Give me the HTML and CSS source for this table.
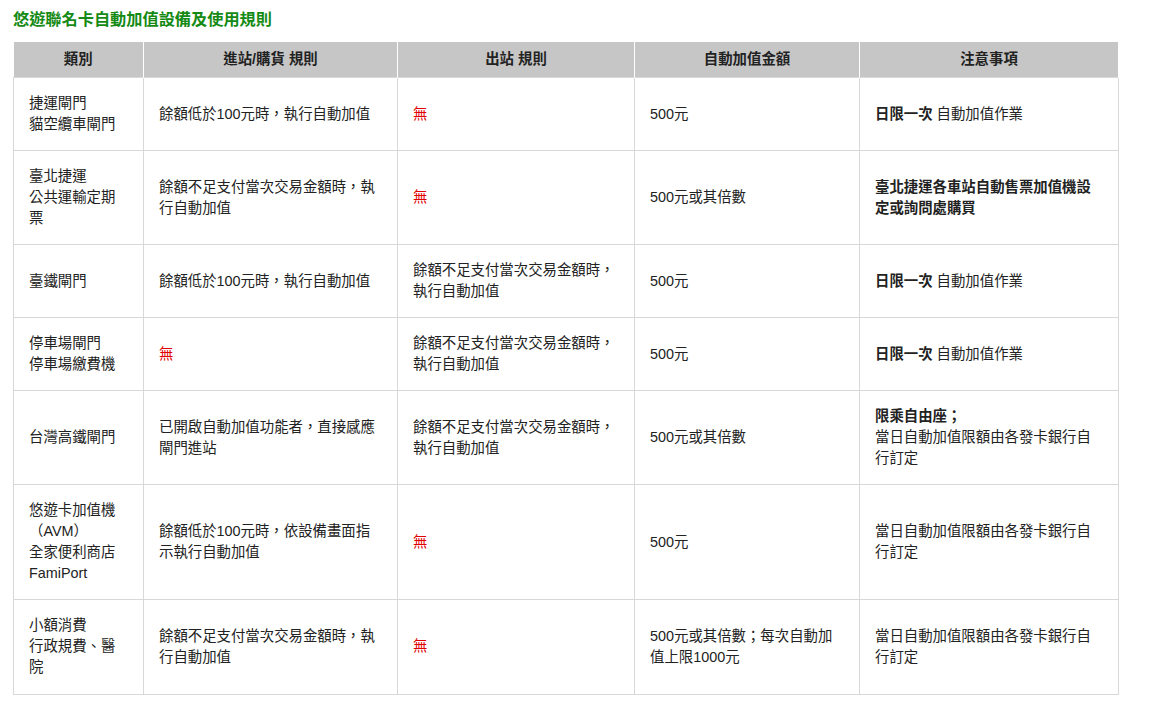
FILE: index.html
```html
<!DOCTYPE html>
<html lang="zh-Hant">
<head>
<meta charset="utf-8">
<title>悠遊聯名卡自動加值設備及使用規則</title>
<link rel="stylesheet" href="styles.css">
</head>
<body>
<h2 class="title">悠遊聯名卡自動加值設備及使用規則</h2>
<table class="rules">
  <colgroup>
    <col class="c1"><col class="c2"><col class="c3"><col class="c4"><col class="c5">
  </colgroup>
  <thead>
    <tr><th>類別</th><th>進站/購貨 規則</th><th>出站 規則</th><th>自動加值金額</th><th>注意事項</th></tr>
  </thead>
  <tbody>
    <tr>
      <td>捷運閘門<br>貓空纜車閘門</td>
      <td>餘額低於100元時，執行自動加值</td>
      <td><span class="none">無</span></td>
      <td>500元</td>
      <td><b>日限一次</b> 自動加值作業</td>
    </tr>
    <tr>
      <td>臺北捷運<br>公共運輸定期票</td>
      <td>餘額不足支付當次交易金額時，執行自動加值</td>
      <td><span class="none">無</span></td>
      <td>500元或其倍數</td>
      <td><b>臺北捷運各車站自動售票加值機設定或詢問處購買</b></td>
    </tr>
    <tr>
      <td>臺鐵閘門</td>
      <td>餘額低於100元時，執行自動加值</td>
      <td>餘額不足支付當次交易金額時，執行自動加值</td>
      <td>500元</td>
      <td><b>日限一次</b> 自動加值作業</td>
    </tr>
    <tr>
      <td>停車場閘門<br>停車場繳費機</td>
      <td><span class="none">無</span></td>
      <td>餘額不足支付當次交易金額時，執行自動加值</td>
      <td>500元</td>
      <td><b>日限一次</b> 自動加值作業</td>
    </tr>
    <tr>
      <td>台灣高鐵閘門</td>
      <td>已開啟自動加值功能者，直接感應閘門進站</td>
      <td>餘額不足支付當次交易金額時，執行自動加值</td>
      <td>500元或其倍數</td>
      <td><b>限乘自由座；</b><br>當日自動加值限額由各發卡銀行自行訂定</td>
    </tr>
    <tr>
      <td>悠遊卡加值機<br>（AVM）<br>全家便利商店<br>FamiPort</td>
      <td>餘額低於100元時，依設備畫面指示執行自動加值</td>
      <td><span class="none">無</span></td>
      <td>500元</td>
      <td>當日自動加值限額由各發卡銀行自行訂定</td>
    </tr>
    <tr>
      <td>小額消費<br>行政規費、醫院</td>
      <td>餘額不足支付當次交易金額時，執行自動加值</td>
      <td><span class="none">無</span></td>
      <td>500元或其倍數；每次自動加值上限1000元</td>
      <td>當日自動加值限額由各發卡銀行自行訂定</td>
    </tr>
  </tbody>
</table>
</body>
</html>
```

FILE: styles.css
```css
html, body {
  margin: 0;
  padding: 0;
  background: #fff;
}
body {
  padding: 8px 13px;
  font-family: "Liberation Sans", "Noto Sans CJK TC", sans-serif;
  color: #222;
}
.title {
  margin: 0 0 12px 0;
  font-size: 16.2px;
  line-height: 22px;
  font-weight: bold;
  color: #158a15;
}
.rules {
  width: 1105px;
  table-layout: fixed;
  border-collapse: collapse;
  font-size: 14.4px;
  line-height: 21px;
}
.c1 { width: 130px; }
.c2 { width: 254px; }
.c3 { width: 237px; }
.c4 { width: 225px; }
.c5 { width: 259px; }
.rules th {
  background: #c6c6c6;
  color: #222;
  font-weight: bold;
  text-align: center;
  padding: 7px 8px;
  border: 1px solid #fff;
  border-top: 0;
}
.rules th:first-child { border-left: 0; }
.rules td {
  border: 1px solid #d8d8d8;
  padding: 15px 16px 15px 15px;
  vertical-align: middle;
  text-align: left;
}
.rules tbody tr:last-child td { padding-bottom: 16px; }
.rules thead tr th { border-bottom: 0; }
.none {
  color: #e00000;
}
b { font-weight: bold; }
```
